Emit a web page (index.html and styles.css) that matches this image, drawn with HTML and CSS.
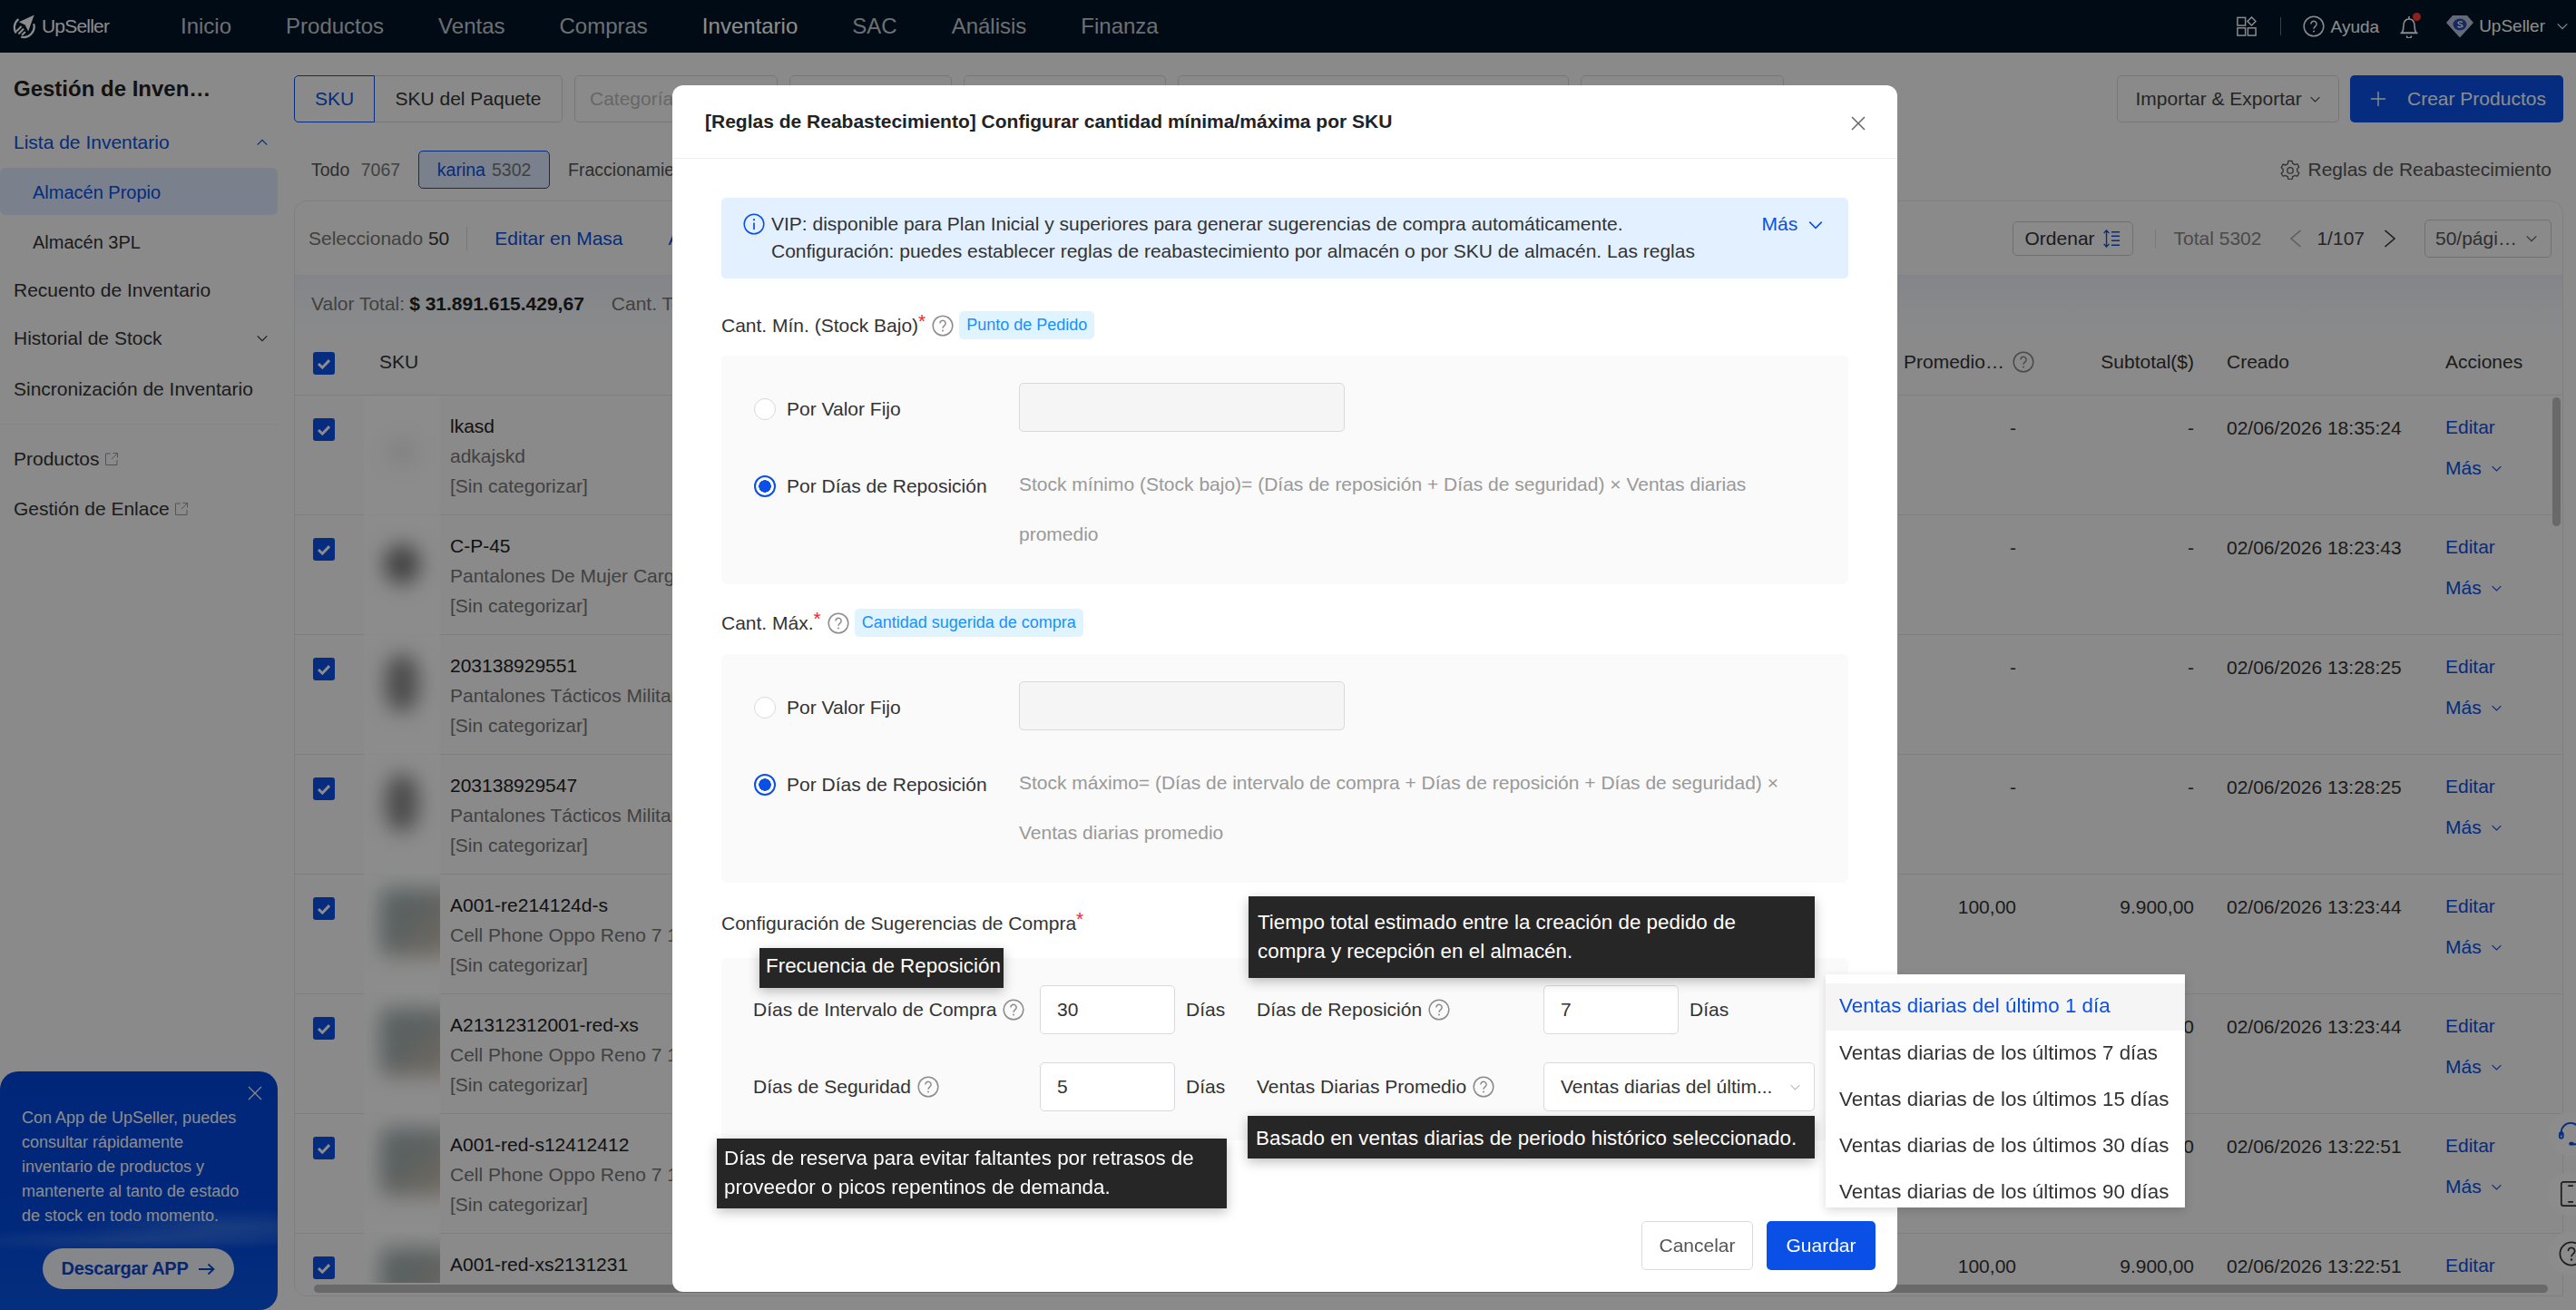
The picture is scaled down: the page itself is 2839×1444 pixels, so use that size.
FILE: index.html
```html
<!DOCTYPE html>
<html lang="es">
<head>
    <meta charset="UTF-8">
    <title>UpSeller - Lista de Inventario</title>
    <link rel="stylesheet" href="styles.css">
</head>
<body>
    <svg class="defs" width="0" height="0">
        <symbol id="i-help" viewBox="0 0 24 24">
            <circle cx="12" cy="12" r="10.8" fill="none" stroke="currentColor" stroke-width="1.5"/>
            <path d="M8.9 9.4a3.1 3.1 0 1 1 4.9 2.5c-1.2.9-1.8 1.4-1.8 2.9" fill="none" stroke="currentColor" stroke-width="1.5"/>
            <circle cx="12" cy="17.6" r="1" fill="currentColor"/>
        </symbol>
        <symbol id="i-down" viewBox="0 0 16 16">
            <path d="M2 5l6 6 6-6" fill="none" stroke="currentColor" stroke-width="1.4"/>
        </symbol>
        <symbol id="i-check" viewBox="0 0 24 24">
            <path d="M6 12.5l4.3 4.2L18 8.6" fill="none" stroke="currentColor" stroke-width="3"/>
        </symbol>
        <symbol id="i-out" viewBox="0 0 16 16">
            <path d="M7 2H1.5v12.5H14V9M9.5 1.5H14.5V6.5M14.5 1.5L8 8" fill="none" stroke="currentColor" stroke-width="1"/>
        </symbol>
    </svg>

    <!-- Barra superior -->
    <header class="topbar">
        <div class="logo">
            <svg class="logo-mark" viewBox="0 0 30 30">
                <path d="M9 6.5A12.5 12.5 0 0 0 6 23M27 12A12.5 12.5 0 0 1 12 27.5" fill="none" stroke="#fff" stroke-width="2.4"/>
                <path d="M27.5 1.5L20.5 21l-3.7-7.5L9.5 10z" fill="#fff"/>
                <path d="M12.5 15L6.5 21M15 18L9 24M17 21.5L13 25.5" fill="none" stroke="#fff" stroke-width="2.2"/>
            </svg>
            <span class="logo-text">UpSeller</span>
        </div>
        <nav class="topnav">
            <a>Inicio</a>
            <a>Productos</a>
            <a>Ventas</a>
            <a>Compras</a>
            <a class="active">Inventario</a>
            <a>SAC</a>
            <a>Análisis</a>
            <a>Finanza</a>
        </nav>
        <div class="topright">
            <svg class="top-apps" viewBox="0 0 24 24">
                <rect x="1" y="1.5" width="9.5" height="9.5" fill="none" stroke="#fff" stroke-width="1.6"/>
                <path d="M18 1l5 5-5 5-5-5z" fill="none" stroke="#fff" stroke-width="1.6"/>
                <rect x="1" y="14" width="9.5" height="9" fill="none" stroke="#fff" stroke-width="1.6"/>
                <rect x="13.5" y="14" width="9.5" height="9" fill="none" stroke="#fff" stroke-width="1.6"/>
            </svg>
            <span class="top-sep"></span>
            <svg class="top-help"><use href="#i-help"/></svg>
            <span class="top-ayuda">Ayuda</span>
            <span class="top-bell">
                <svg viewBox="0 0 22 26">
                    <path d="M3 20c1.5-1.5 1.8-3 1.8-6.5C4.8 8 7 5 11 5s6.2 3 6.2 8.5c0 3.5.3 5 1.8 6.5zM1.5 20.5h19M8.5 23.5a2.5 2.5 0 0 0 5 0M11 2v3" fill="none" stroke="#fff" stroke-width="1.6"/>
                </svg>
                <i class="bell-dot"></i>
            </span>
            <svg class="top-gem" viewBox="0 0 30 26">
                <path d="M7 1h16l7 8-15 16.5L0 9z" fill="#b9bfdc"/>
                <ellipse cx="15" cy="11" rx="7.5" ry="6.5" fill="#2a4aa8"/>
                <path d="M18 8.5c-1.5-1-5-1-5 .8 0 2 5 1 5 3.2 0 1.8-3.8 1.8-5.5.6" fill="none" stroke="#fff" stroke-width="1.3"/>
            </svg>
            <span class="top-user">UpSeller</span>
            <svg class="top-caret"><use href="#i-down"/></svg>
        </div>
    </header>

    <div class="page">
        <!-- Menu lateral -->
        <aside class="sidebar">
            <h2>Gestión de Inven…</h2>
            <a class="side-item open">Lista de Inventario
                <svg class="side-caret flip"><use href="#i-down"/></svg>
            </a>
            <a class="side-sub current">Almacén Propio</a>
            <a class="side-sub">Almacén 3PL</a>
            <a class="side-item recount">Recuento de Inventario</a>
            <a class="side-item history">Historial de Stock
                <svg class="side-caret"><use href="#i-down"/></svg>
            </a>
            <a class="side-item sync">Sincronización de Inventario</a>
            <div class="side-line"></div>
            <a class="side-item links">Productos <svg class="out"><use href="#i-out"/></svg></a>
            <a class="side-item links">Gestión de Enlace <svg class="out"><use href="#i-out"/></svg></a>

            <div class="promo">
                <svg class="promo-x" viewBox="0 0 16 16"><path d="M1 1l14 14M15 1L1 15" stroke="#fff" stroke-width="1.2"/></svg>
                <p>Con App de UpSeller, puedes consultar rápidamente inventario de productos y mantenerte al tanto de estado de stock en todo momento.</p>
                <a class="promo-btn">Descargar APP
                    <svg viewBox="0 0 18 14"><path d="M0 7h16M10.5 1.5L16.5 7l-6 5.5" fill="none" stroke="currentColor" stroke-width="1.8"/></svg>
                </a>
            </div>
        </aside>

        <main class="content">
            <div class="filters">
                <div class="seg">
                    <span class="seg-on">SKU</span>
                    <span class="seg-off">SKU del Paquete</span>
                </div>
                <span class="fake-input w224">Categoría</span>
                <span class="fake-input w179"></span>
                <span class="fake-input w223"></span>
                <span class="fake-input w431"></span>
                <span class="fake-input w224"></span>
                <div class="filters-right">
                    <button class="btn-plain">Importar &amp; Exportar <svg><use href="#i-down"/></svg></button>
                    <button class="btn-main">
                        <svg class="plus" viewBox="0 0 20 20"><path d="M10 1v18M1 10h18" stroke="#fff" stroke-width="1.6"/></svg>
                        Crear Productos
                    </button>
                </div>
            </div>

            <div class="subtabs">
                <span class="subtab">Todo <em>7067</em></span>
                <span class="subtab on">karina <em>5302</em></span>
                <span class="subtab">Fraccionamiento</span>
                <span class="rules">
                    <svg viewBox="0 0 24 24">
                        <path d="M9.8 1.5h4.4l.7 3 2.7 1.5 2.900-.9 2.200 3.800-2.200 2.100v3l2.200 2.100-2.200 3.800-2.900-.9-2.700 1.500-.7 3H9.800l-.7-3-2.700-1.500-2.900.9L1.300 16.600l2.200-2.100v-3L1.300 9.400l2.200-3.800 2.900.9 2.700-1.500z" fill="none" stroke="currentColor" stroke-width="1.4"/>
                        <circle cx="12" cy="13" r="3.5" fill="none" stroke="currentColor" stroke-width="1.4"/>
                    </svg>
                    Reglas de Reabastecimiento
                </span>
            </div>

            <section class="card">
                <div class="toolbar">
                    <span class="selected">Seleccionado <b>50</b></span>
                    <span class="bar-sep"></span>
                    <a class="link">Editar en Masa</a>
                    <a class="link more-link">Agregar</a>
                    <div class="toolbar-right">
                        <button class="btn-sort">Ordenar
                            <svg viewBox="0 0 22 22">
                                <path d="M5 1v20M1.8 4.5L5 1l3.2 3.5M1.8 17.5L5 21l3.2-3.5M11 3h10M11 8h10M11 13.5h10M11 19h10" fill="none" stroke="#0a50e6" stroke-width="1.5"/>
                            </svg>
                        </button>
                        <span class="bar-sep"></span>
                        <span class="total">Total 5302</span>
                        <svg class="pg prev" viewBox="0 0 14 22"><path d="M12.5 2L2 11l10.5 9" fill="none" stroke="#aaa" stroke-width="1.6"/></svg>
                        <span class="pg-num">1/107</span>
                        <svg class="pg next" viewBox="0 0 14 22"><path d="M1.5 2L12 11 1.5 20" fill="none" stroke="#333" stroke-width="1.6"/></svg>
                        <span class="page-size">50/pági… <svg><use href="#i-down"/></svg></span>
                    </div>
                </div>

                <div class="stats">Valor Total: <b>$ 31.891.615.429,67</b> <span class="stats-next">Cant. Total</span></div>

                <div class="table-wrap">
                    <table class="stock">
                        <colgroup>
                            <col class="c-check"><col class="c-img"><col class="c-sku"><col class="c-avg"><col class="c-sub"><col class="c-date"><col class="c-act">
                        </colgroup>
                        <thead>
                            <tr>
                                <th><span class="chk"><svg><use href="#i-check"/></svg></span></th>
                                <th class="th-sku" colspan="2">SKU</th>
                                <th class="num"><span class="th-avg">Promedio… <svg><use href="#i-help"/></svg></span></th>
                                <th class="num">Subtotal($)</th>
                                <th>Creado</th>
                                <th>Acciones</th>
                            </tr>
                        </thead>
                        <tbody>
                            <tr>
                                <td><span class="chk"><svg><use href="#i-check"/></svg></span></td>
                                <td class="thumb"><div class="blob faint"></div></td>
                                <td class="sku"><div class="name">lkasd</div><div class="desc">adkajskd</div><div class="desc">[Sin categorizar]</div></td>
                                <td class="num">-</td><td class="num">-</td>
                                <td class="date">02/06/2026 18:35:24</td>
                                <td class="act"><a class="link">Editar</a><a class="link mas">Más <svg><use href="#i-down"/></svg></a></td>
                            </tr>
                            <tr>
                                <td><span class="chk"><svg><use href="#i-check"/></svg></span></td>
                                <td class="thumb"><div class="blob round"></div></td>
                                <td class="sku"><div class="name">C-P-45</div><div class="desc">Pantalones De Mujer Cargo Casuales</div><div class="desc">[Sin categorizar]</div></td>
                                <td class="num">-</td><td class="num">-</td>
                                <td class="date">02/06/2026 18:23:43</td>
                                <td class="act"><a class="link">Editar</a><a class="link mas">Más <svg><use href="#i-down"/></svg></a></td>
                            </tr>
                            <tr>
                                <td><span class="chk"><svg><use href="#i-check"/></svg></span></td>
                                <td class="thumb"><div class="blob tall"></div></td>
                                <td class="sku"><div class="name">203138929551</div><div class="desc">Pantalones Tácticos Militares</div><div class="desc">[Sin categorizar]</div></td>
                                <td class="num">-</td><td class="num">-</td>
                                <td class="date">02/06/2026 13:28:25</td>
                                <td class="act"><a class="link">Editar</a><a class="link mas">Más <svg><use href="#i-down"/></svg></a></td>
                            </tr>
                            <tr>
                                <td><span class="chk"><svg><use href="#i-check"/></svg></span></td>
                                <td class="thumb"><div class="blob tall"></div></td>
                                <td class="sku"><div class="name">203138929547</div><div class="desc">Pantalones Tácticos Militares</div><div class="desc">[Sin categorizar]</div></td>
                                <td class="num">-</td><td class="num">-</td>
                                <td class="date">02/06/2026 13:28:25</td>
                                <td class="act"><a class="link">Editar</a><a class="link mas">Más <svg><use href="#i-down"/></svg></a></td>
                            </tr>
                            <tr>
                                <td><span class="chk"><svg><use href="#i-check"/></svg></span></td>
                                <td class="thumb"><div class="blob phone"></div></td>
                                <td class="sku"><div class="name">A001-re214124d-s</div><div class="desc">Cell Phone Oppo Reno 7 10</div><div class="desc">[Sin categorizar]</div></td>
                                <td class="num">100,00</td><td class="num">9.900,00</td>
                                <td class="date">02/06/2026 13:23:44</td>
                                <td class="act"><a class="link">Editar</a><a class="link mas">Más <svg><use href="#i-down"/></svg></a></td>
                            </tr>
                            <tr>
                                <td><span class="chk"><svg><use href="#i-check"/></svg></span></td>
                                <td class="thumb"><div class="blob phone"></div></td>
                                <td class="sku"><div class="name">A21312312001-red-xs</div><div class="desc">Cell Phone Oppo Reno 7 10</div><div class="desc">[Sin categorizar]</div></td>
                                <td class="num">100,00</td><td class="num">9.900,00</td>
                                <td class="date">02/06/2026 13:23:44</td>
                                <td class="act"><a class="link">Editar</a><a class="link mas">Más <svg><use href="#i-down"/></svg></a></td>
                            </tr>
                            <tr>
                                <td><span class="chk"><svg><use href="#i-check"/></svg></span></td>
                                <td class="thumb"><div class="blob phone"></div></td>
                                <td class="sku"><div class="name">A001-red-s12412412</div><div class="desc">Cell Phone Oppo Reno 7 10</div><div class="desc">[Sin categorizar]</div></td>
                                <td class="num">100,00</td><td class="num">9.900,00</td>
                                <td class="date">02/06/2026 13:22:51</td>
                                <td class="act"><a class="link">Editar</a><a class="link mas">Más <svg><use href="#i-down"/></svg></a></td>
                            </tr>
                            <tr>
                                <td><span class="chk"><svg><use href="#i-check"/></svg></span></td>
                                <td class="thumb"><div class="blob phone"></div></td>
                                <td class="sku"><div class="name">A001-red-xs2131231</div></td>
                                <td class="num">100,00</td><td class="num">9.900,00</td>
                                <td class="date">02/06/2026 13:22:51</td>
                                <td class="act"><a class="link">Editar</a></td>
                            </tr>
                        </tbody>
                    </table>
                </div>
                <div class="scroll-y"></div>
                <div class="scroll-x"></div>
            </section>
        </main>
    </div>

    <!-- Botones flotantes -->
    <div class="float-btn fb1">
        <svg viewBox="0 0 30 30"><path d="M3 17v-4a11 11 0 0 1 22 0v4M15 27h8" fill="none" stroke="#0a50e6" stroke-width="2"/><rect x="1" y="13" width="4" height="7" rx="2" fill="none" stroke="#0a50e6" stroke-width="2"/><rect x="12" y="24.5" width="6" height="4" rx="2" fill="#0a50e6"/></svg>
    </div>
    <div class="float-btn fb2">
        <svg viewBox="0 0 30 30"><rect x="3" y="1" width="22" height="28" rx="2.5" fill="none" stroke="#333" stroke-width="1.8"/><path d="M11 5.5h6M11 24.5h6" stroke="#333" stroke-width="1.8"/></svg>
    </div>
    <div class="float-btn fb3">
        <svg><use href="#i-help"/></svg>
    </div>

    <!-- Modal reglas -->
    <div class="mask"></div>
    <div class="modal">
        <div class="modal-head">
            <h3>[Reglas de Reabastecimiento] Configurar cantidad mínima/máxima por SKU</h3>
            <svg class="modal-x" viewBox="0 0 16 16"><path d="M1 1l14 14M15 1L1 15" stroke="#666" stroke-width="1.5"/></svg>
        </div>

        <div class="modal-body">
            <div class="notice">
                <svg class="notice-i" viewBox="0 0 24 24">
                    <circle cx="12" cy="12" r="10.8" fill="none" stroke="#0a50e6" stroke-width="1.5"/>
                    <path d="M12 10.5v7.5" stroke="#0a50e6" stroke-width="1.7"/>
                    <circle cx="12" cy="7.2" r="1.1" fill="#0a50e6"/>
                </svg>
                <div class="notice-text">VIP: disponible para Plan Inicial y superiores para generar sugerencias de compra automáticamente.<br>Configuración: puedes establecer reglas de reabastecimiento por almacén o por SKU de almacén. Las reglas</div>
                <a class="notice-more">Más <svg><use href="#i-down"/></svg></a>
            </div>

            <div class="field-label first">Cant. Mín. (Stock Bajo)<i class="req">*</i> <svg class="q"><use href="#i-help"/></svg><span class="tag">Punto de Pedido</span></div>
            <div class="panel">
                <div class="opt-row">
                    <label class="opt"><span class="radio"></span>Por Valor Fijo</label>
                    <span class="box-input"></span>
                </div>
                <div class="opt-row gap">
                    <label class="opt on"><span class="radio checked"></span>Por Días de Reposición</label>
                    <p class="formula">Stock mínimo (Stock bajo)= (Días de reposición + Días de seguridad) × Ventas diarias promedio</p>
                </div>
            </div>

            <div class="field-label">Cant. Máx.<i class="req">*</i> <svg class="q"><use href="#i-help"/></svg><span class="tag">Cantidad sugerida de compra</span></div>
            <div class="panel">
                <div class="opt-row">
                    <label class="opt"><span class="radio"></span>Por Valor Fijo</label>
                    <span class="box-input"></span>
                </div>
                <div class="opt-row gap">
                    <label class="opt on"><span class="radio checked"></span>Por Días de Reposición</label>
                    <p class="formula">Stock máximo= (Días de intervalo de compra + Días de reposición + Días de seguridad) × Ventas diarias promedio</p>
                </div>
            </div>

            <div class="field-label plain">Configuración de Sugerencias de Compra<i class="req">*</i></div>
            <div class="panel sug">
                <span class="sug-label">Días de Intervalo de Compra <svg class="q"><use href="#i-help"/></svg></span>
                <span class="num-input">30</span>
                <span class="unit">Días</span>
                <span class="sug-label">Días de Reposición <svg class="q"><use href="#i-help"/></svg></span>
                <span class="num-input">7</span>
                <span class="unit">Días</span>

                <span class="sug-label">Días de Seguridad <svg class="q"><use href="#i-help"/></svg></span>
                <span class="num-input">5</span>
                <span class="unit">Días</span>
                <span class="sug-label">Ventas Diarias Promedio <svg class="q"><use href="#i-help"/></svg></span>
                <span class="select-input">Ventas diarias del últim... <svg><use href="#i-down"/></svg></span>
            </div>
        </div>

        <div class="modal-foot">
            <button class="btn-cancel">Cancelar</button>
            <button class="btn-save">Guardar</button>
        </div>

        <div class="tip tip-freq">Frecuencia de Reposición</div>
        <div class="tip tip-lead">Tiempo total estimado entre la creación de pedido de compra y recepción en el almacén.</div>
        <div class="tip tip-avg">Basado en ventas diarias de periodo histórico seleccionado.</div>
        <div class="tip tip-safe">Días de reserva para evitar faltantes por retrasos de proveedor o picos repentinos de demanda.</div>

        <ul class="drop">
            <li class="sel">Ventas diarias del último 1 día</li>
            <li>Ventas diarias de los últimos 7 días</li>
            <li>Ventas diarias de los últimos 15 días</li>
            <li>Ventas diarias de los últimos 30 días</li>
            <li>Ventas diarias de los últimos 90 días</li>
        </ul>
    </div>
</body>
</html>
```

FILE: styles.css
```css
* {
    box-sizing: border-box;
}
html, body {
    margin: 0;
    height: 100%;
    overflow: hidden;
}
body {
    font-family: "Liberation Sans", Arial, sans-serif;
    font-size: 21px;
    color: #333;
    background: #fcfcfc;
    display: flex;
    flex-direction: column;
}
.defs {
    position: absolute;
}
a {
    text-decoration: none;
}
button {
    font-family: inherit;
}

/* Barra superior */
.topbar {
    height: 58px;
    flex: none;
    background: #001529;
    display: flex;
    align-items: center;
    padding-left: 12px;
    color: #fff;
}
.logo {
    width: 187px;
    display: flex;
    align-items: center;
    gap: 6px;
}
.logo-mark {
    width: 28px;
    height: 28px;
}
.logo-text {
    font-size: 21px;
    letter-spacing: -0.8px;
}
.topnav {
    display: flex;
    gap: 60px;
    font-size: 24px;
}
.topnav a {
    color: rgba(255, 255, 255, 0.78);
}
.topnav a.active {
    color: #fff;
}
.topright {
    margin-left: auto;
    display: flex;
    align-items: center;
    padding-right: 8px;
    font-size: 19px;
}
.top-apps {
    width: 22px;
    height: 22px;
}
.top-sep {
    width: 1px;
    height: 20px;
    background: rgba(255, 255, 255, 0.4);
    margin: 0 24px 0 26px;
}
.top-help {
    width: 24px;
    height: 24px;
}
.top-ayuda {
    margin: 2px 22px 0 7px;
}
.top-bell {
    position: relative;
    width: 22px;
    height: 26px;
    margin-right: 30px;
}
.top-bell svg {
    width: 22px;
    height: 26px;
}
.bell-dot {
    position: absolute;
    top: -2px;
    right: -2px;
    width: 9px;
    height: 9px;
    border-radius: 50%;
    background: #ff3b30;
}
.top-gem {
    width: 30px;
    height: 26px;
}
.top-user {
    margin: 0 12px 0 6px;
}
.top-caret {
    width: 14px;
    height: 14px;
}

.page {
    flex: 1;
    display: flex;
    min-height: 0;
}

/* Menu lateral */
.sidebar {
    width: 306px;
    flex: none;
    position: relative;
    padding-top: 26px;
}
.sidebar h2 {
    margin: 0 0 31px 15px;
    font-size: 24px;
    line-height: 28px;
    color: #222;
}
.side-item,
.side-sub {
    display: flex;
    align-items: center;
    color: #333;
    line-height: 28px;
    padding-left: 15px;
    position: relative;
}
.side-item.open {
    color: #0a50e6;
    height: 28px;
}
.side-sub {
    height: 54px;
    padding-left: 36px;
    margin-top: 3px;
    border-radius: 6px;
    font-size: 20px;
}
.side-sub.current {
    height: 52px;
    padding-top: 2px;
    margin-top: 14px;
    color: #0a50e6;
    background: #dfeaff;
}
.side-caret {
    position: absolute;
    right: 10px;
    top: 7px;
    width: 14px;
    height: 14px;
}
.side-caret.flip {
    transform: rotate(180deg);
}
.recount {
    margin-top: 12px;
}
.history {
    margin-top: 25px;
}
.sync {
    margin-top: 28px;
}
.side-line {
    height: 1px;
    background: #eee;
    margin-top: 24px;
}
.links {
    margin-top: 24px;
    gap: 5px;
}
.links + .links {
    margin-top: 27px;
}
.out {
    width: 16px;
    height: 16px;
    color: #999;
}
.promo {
    position: absolute;
    left: 0;
    right: 0;
    bottom: 0;
    height: 263px;
    border-radius: 20px 20px 20px 0;
    padding: 38px 32px 0 24px;
    color: #fff;
    font-size: 18px;
    line-height: 27px;
    background:
        radial-gradient(ellipse 170px 22px at 250px 172px, rgba(150, 190, 255, 0.32), transparent),
        radial-gradient(ellipse 200px 14px at 130px 186px, rgba(150, 190, 255, 0.25), transparent),
        linear-gradient(180deg, #0046dd 0%, #0049e0 60%, #0a55e6 100%);
}
.promo p {
    margin: 0;
}
.promo-x {
    position: absolute;
    right: 17px;
    top: 16px;
    width: 16px;
    height: 16px;
}
.promo-btn {
    position: absolute;
    left: 47px;
    top: 195px;
    width: 211px;
    height: 45px;
    border-radius: 23px;
    background: rgba(255, 255, 255, 0.95);
    color: #0a47d0;
    font-size: 20px;
    font-weight: 700;
    letter-spacing: -0.3px;
    display: flex;
    align-items: center;
    justify-content: center;
    gap: 12px;
}
.promo-btn svg {
    width: 18px;
    height: 14px;
}

/* Contenido */
.content {
    flex: 1;
    min-width: 0;
    padding: 25px 14px 15px 18px;
    display: flex;
    flex-direction: column;
}
.filters {
    display: flex;
    gap: 13px;
    height: 52px;
    flex: none;
}
.seg {
    display: flex;
}
.seg span {
    display: flex;
    align-items: center;
    justify-content: center;
    border: 1px solid #d9d9d9;
}
.seg-on {
    width: 89px;
    color: #0a50e6;
    border-color: #0a50e6 !important;
    border-radius: 5px 0 0 5px;
}
.seg-off {
    width: 207px;
    border-left: 0 !important;
    border-radius: 0 5px 5px 0;
}
.fake-input {
    border: 1px solid #d9d9d9;
    border-radius: 5px;
    color: #bbb;
    display: flex;
    align-items: center;
    padding-left: 16px;
}
.w224 {
    width: 224px;
}
.w179 {
    width: 179px;
}
.w223 {
    width: 223px;
}
.w431 {
    width: 431px;
}
.filters-right {
    margin-left: auto;
    display: flex;
    gap: 12px;
}
.btn-plain {
    width: 245px;
    border: 1px solid #d9d9d9;
    border-radius: 5px;
    background: transparent;
    color: #444;
    font-size: 21px;
    padding: 0;
}
.btn-plain svg {
    width: 13px;
    height: 13px;
    margin-left: 2px;
}
.btn-main {
    width: 235px;
    border: 0;
    border-radius: 5px;
    background: #0a50e6;
    color: #fff;
    font-size: 21px;
    display: flex;
    align-items: center;
    padding-left: 22px;
    white-space: nowrap;
}
.plus {
    width: 18px;
    height: 18px;
    margin-right: 23px;
}
.subtabs {
    display: flex;
    align-items: center;
    margin-top: 31px;
    height: 42px;
    flex: none;
    padding-left: 19px;
    font-size: 19.5px;
}
.subtab {
    color: #555;
    margin-right: 20px;
}
.subtab em {
    font-style: normal;
    color: #777;
    margin-left: 7px;
}
.subtab.on {
    height: 42px;
    width: 145px;
    display: flex;
    align-items: center;
    justify-content: center;
    border: 1px solid #0a50e6;
    border-radius: 5px;
    background: #dfeaff;
    color: #0a50e6;
}
.rules {
    margin-left: auto;
    padding-right: 13px;
    color: #555;
    font-size: 21px;
    display: flex;
    align-items: center;
    gap: 9px;
}
.rules svg {
    width: 22px;
    height: 22px;
}
.card {
    position: relative;
    margin-top: 13px;
    flex: 1;
    min-height: 0;
    border: 1px solid #e8e8e8;
    border-radius: 14px 14px 0 14px;
    overflow: hidden;
    display: flex;
    flex-direction: column;
}
.toolbar {
    height: 82px;
    flex: none;
    border-bottom: 1px solid #eee;
    display: flex;
    align-items: center;
    padding: 0 12px 0 15px;
}
.selected {
    color: #777;
}
.selected b {
    font-weight: 400;
    color: #333;
}
.bar-sep {
    width: 1px;
    height: 28px;
    background: #ddd;
}
.toolbar > .bar-sep {
    margin: 0 30px 0 19px;
}
.link {
    color: #0a50e6;
}
.more-link {
    margin-left: 50px;
}
.toolbar-right {
    margin-left: auto;
    display: flex;
    align-items: center;
}
.btn-sort {
    width: 133px;
    height: 38px;
    border: 1px solid #ccc;
    border-radius: 5px;
    background: transparent;
    color: #333;
    font-size: 21px;
    display: flex;
    align-items: center;
    padding-left: 13px;
    gap: 8px;
}
.btn-sort svg {
    width: 20px;
    height: 20px;
}
.toolbar-right .bar-sep {
    height: 20px;
    margin: 0 20px 0 24px;
}
.total {
    color: #888;
}
.pg {
    width: 14px;
    height: 22px;
}
.prev {
    margin-left: 31px;
}
.pg-num {
    margin: 0 21px 0 16px;
    color: #444;
}
.page-size {
    width: 140px;
    height: 42px;
    margin-left: 31px;
    border: 1px solid #ccc;
    border-radius: 5px;
    display: flex;
    align-items: center;
    justify-content: space-between;
    padding: 0 14px 0 11px;
    color: #555;
}
.page-size svg {
    width: 14px;
    height: 14px;
}
.stats {
    height: 63px;
    flex: none;
    display: flex;
    align-items: center;
    padding: 0 0 2px 18px;
    color: #777;
    background: linear-gradient(180deg, #eef3fb, #fbfcfe);
}
.stats b {
    color: #222;
    margin-left: 5px;
}
.stats-next {
    margin-left: 30px;
}

/* Tabla */
.table-wrap {
    flex: 1;
    min-height: 0;
    overflow: hidden;
    margin-bottom: 14px;
}
.stock {
    table-layout: fixed;
    width: 2498px;
    border-collapse: collapse;
}
.c-check {
    width: 76px;
}
.c-img {
    width: 84px;
}
.c-sku {
    width: 1595px;
}
.c-avg {
    width: 160px;
}
.c-sub {
    width: 196px;
}
.c-date {
    width: 241px;
}
.c-act {
    width: 146px;
}
.stock th {
    height: 68px;
    padding: 0 18px 4px;
    font-weight: 400;
    text-align: left;
    color: #333;
    border-bottom: 1px solid #e8e8e8;
}
.stock th.th-sku {
    padding-left: 17px;
}
.stock th:first-child,
.stock td:first-child {
    padding: 0 0 0 20px;
}
.stock th.num,
.stock td.num {
    text-align: right;
}
.th-avg {
    display: inline-flex;
    align-items: center;
    gap: 9px;
    white-space: nowrap;
    margin-right: -16px;
}
.th-avg svg {
    width: 24px;
    height: 24px;
    color: #888;
}
.stock td {
    height: 132px;
    padding: 19px 18px 0;
    vertical-align: top;
    border-bottom: 1px solid #e8e8e8;
    color: #333;
    line-height: 33px;
}
.stock td:first-child {
    padding-top: 25px;
}
.chk {
    display: block;
    width: 24px;
    height: 25px;
    border-radius: 3px;
    background: #0a50e6;
    color: #fff;
}
.chk svg {
    display: block;
    width: 24px;
    height: 25px;
}
.stock td.thumb {
    padding: 0;
    border-bottom-color: transparent;
    overflow: hidden;
    background: #fff;
}
.stock td.sku {
    padding: 17px 0 0 11px;
    white-space: nowrap;
}
.name {
    color: #222;
}
.desc {
    color: #777;
}
.blob {
    filter: blur(11px);
    margin: 0 auto;
}
.faint {
    width: 36px;
    height: 36px;
    margin-top: 44px;
    border-radius: 50%;
    background: #efefef;
}
.round {
    width: 40px;
    height: 44px;
    margin-top: 32px;
    border-radius: 50%;
    background: #7a7a7a;
}
.tall {
    width: 36px;
    height: 62px;
    margin-top: 22px;
    border-radius: 40%;
    background: #8a8a8a;
}
.phone {
    width: 84px;
    height: 74px;
    margin: 16px 0 0 18px;
    border-radius: 10px;
    background: linear-gradient(135deg, #a3b0b0 35%, #d0c0b0 90%);
}
.date {
    white-space: nowrap;
}
.stock td.act {
    line-height: 32px;
    white-space: nowrap;
}
.act a {
    display: block;
}
.act .mas {
    margin-top: 13px;
}
.mas svg {
    width: 13px;
    height: 13px;
    margin-left: 4px;
}
.scroll-y {
    position: absolute;
    right: 2px;
    top: 216px;
    width: 9px;
    height: 142px;
    border-radius: 5px;
    background: #c0c0c0;
}
.scroll-x {
    position: absolute;
    left: 21px;
    right: 16px;
    bottom: 3px;
    height: 9px;
    border-radius: 5px;
    background: #c0c0c0;
}

/* Botones flotantes */
.float-btn {
    position: absolute;
    left: 2808px;
    width: 48px;
    height: 48px;
    border-radius: 50%;
    background: #fff;
    display: flex;
    align-items: center;
    padding-left: 12px;
}
.float-btn svg {
    width: 28px;
    height: 28px;
    flex: none;
    color: #333;
}
.fb1 {
    top: 1226px;
}
.fb2 {
    top: 1292px;
}
.fb3 {
    top: 1358px;
}

/* Modal */
.mask {
    position: fixed;
    inset: 0;
    background: rgba(0, 0, 0, 0.45);
}
.modal {
    position: absolute;
    left: 741px;
    top: 94px;
    width: 1350px;
    height: 1330px;
    background: #fff;
    border-radius: 12px;
    display: flex;
    flex-direction: column;
}
.modal-head {
    height: 81px;
    flex: none;
    border-bottom: 1px solid #eee;
    display: flex;
    align-items: center;
    justify-content: space-between;
    padding: 0 35px 0 36px;
}
.modal-head h3 {
    margin: 0 0 1px;
    font-size: 21px;
    color: #222;
}
.modal-x {
    width: 16px;
    height: 16px;
    margin-top: 4px;
}
.modal-body {
    flex: 1;
    padding: 43px 54px 0;
    min-height: 0;
}
.notice {
    height: 89px;
    background: #e3f0ff;
    border-radius: 5px;
    display: flex;
    padding: 14px 27px 0 24px;
    line-height: 30px;
    overflow: hidden;
}
.notice-i {
    width: 24px;
    height: 24px;
    margin: 3px 7px 0 0;
    flex: none;
}
.notice-text {
    flex: 1;
    color: #333;
    white-space: nowrap;
}
.notice-more {
    color: #0a50e6;
    white-space: nowrap;
}
.notice-more svg {
    width: 18px;
    height: 18px;
    margin-left: 5px;
    vertical-align: -3px;
}
.field-label {
    display: flex;
    align-items: center;
    height: 31px;
    margin: 27px 0 19px;
    color: #333;
}
.field-label.first {
    margin: 36px 0 18px;
}
.field-label.plain {
    margin: 29px 0 23px;
}
.req {
    color: #f5222d;
    font-style: normal;
    align-self: flex-start;
    margin-top: -1px;
}
.q {
    width: 24px;
    height: 24px;
    color: #8c8c8c;
    flex: none;
    margin-left: 7px;
}
.tag {
    margin-left: 6px;
    height: 31px;
    padding: 0 8px;
    border-radius: 5px;
    background: #e0f4ff;
    color: #1890ff;
    font-size: 18px;
    display: flex;
    align-items: center;
}
.panel {
    background: #fafafa;
    border-radius: 6px;
    padding: 30px 36px 28px;
}
.opt-row {
    display: flex;
    align-items: flex-start;
}
.opt-row.gap {
    margin-top: 29px;
}
.opt {
    width: 292px;
    flex: none;
    display: flex;
    align-items: center;
    gap: 12px;
    height: 54px;
    margin-top: 2px;
    color: #333;
}
.radio {
    width: 24px;
    height: 24px;
    flex: none;
    border: 1px solid #d9d9d9;
    border-radius: 50%;
    background: #fff;
}
.radio.checked {
    border: 2px solid #0a50e6;
    background: radial-gradient(circle, #0a50e6 0 6.5px, #fff 7px);
}
.box-input {
    width: 359px;
    height: 54px;
    border: 1px solid #d9d9d9;
    border-radius: 5px;
    background: #f5f5f5;
}
.formula {
    margin: 0;
    width: 860px;
    line-height: 54.5px;
    color: #999;
}
.sug {
    display: grid;
    grid-template-columns: 316px 149px 90px 316px 149px 1fr;
    row-gap: 31px;
    align-items: center;
    padding: 30px 0 32px 35px;
}
.sug-label {
    display: flex;
    align-items: center;
    color: #333;
    white-space: nowrap;
}
.num-input {
    height: 54px;
    background: #fff;
    border: 1px solid #d9d9d9;
    border-radius: 5px;
    display: flex;
    align-items: center;
    padding-left: 18px;
    color: #333;
}
.unit {
    padding-left: 12px;
    color: #333;
}
.select-input {
    grid-column: span 2;
    width: 299px;
    height: 54px;
    background: #fff;
    border: 1px solid #d9d9d9;
    border-radius: 5px;
    display: flex;
    align-items: center;
    justify-content: space-between;
    padding: 0 14px 0 18px;
    color: #333;
    white-space: nowrap;
}
.select-input svg {
    width: 13px;
    height: 13px;
    color: #bbb;
}
.modal-foot {
    display: flex;
    justify-content: flex-end;
    gap: 15px;
    padding: 0 24px 24px;
}
.modal-foot button {
    height: 54px;
    border-radius: 5px;
    font-size: 21px;
}
.btn-cancel {
    width: 123px;
    border: 1px solid #d9d9d9;
    background: #fff;
    color: #555;
}
.btn-save {
    width: 120px;
    border: 0;
    background: #0a50e6;
    color: #fff;
}
.tip {
    position: absolute;
    background: #262626;
    color: #fff;
    font-size: 22.4px;
    line-height: 32px;
    box-shadow: 0 4px 12px rgba(0, 0, 0, 0.25);
}
.tip-freq {
    left: 96px;
    top: 951px;
    width: 269px;
    height: 44px;
    padding: 4px 7px;
    white-space: nowrap;
}
.tip-lead {
    left: 635px;
    top: 894px;
    width: 624px;
    height: 90px;
    padding: 13px 10px;
}
.tip-avg {
    left: 634px;
    top: 1136px;
    width: 625px;
    height: 47px;
    padding: 9px 9px;
    white-space: nowrap;
}
.tip-safe {
    left: 49px;
    top: 1161px;
    width: 562px;
    height: 77px;
    padding: 6px 8px;
}
.drop {
    position: absolute;
    left: 1271px;
    top: 980px;
    width: 396px;
    height: 257px;
    margin: 0;
    padding: 10px 0 0;
    list-style: none;
    background: #fff;
    font-size: 22.4px;
    overflow: hidden;
    box-shadow: 0 3px 10px rgba(0, 0, 0, 0.15);
}
.drop li {
    height: 51px;
    line-height: 50px;
    padding-left: 15px;
    white-space: nowrap;
    color: #333;
}
.drop li.sel {
    height: 52px;
    color: #0a50e6;
    background: #f5f5f5;
}
```
